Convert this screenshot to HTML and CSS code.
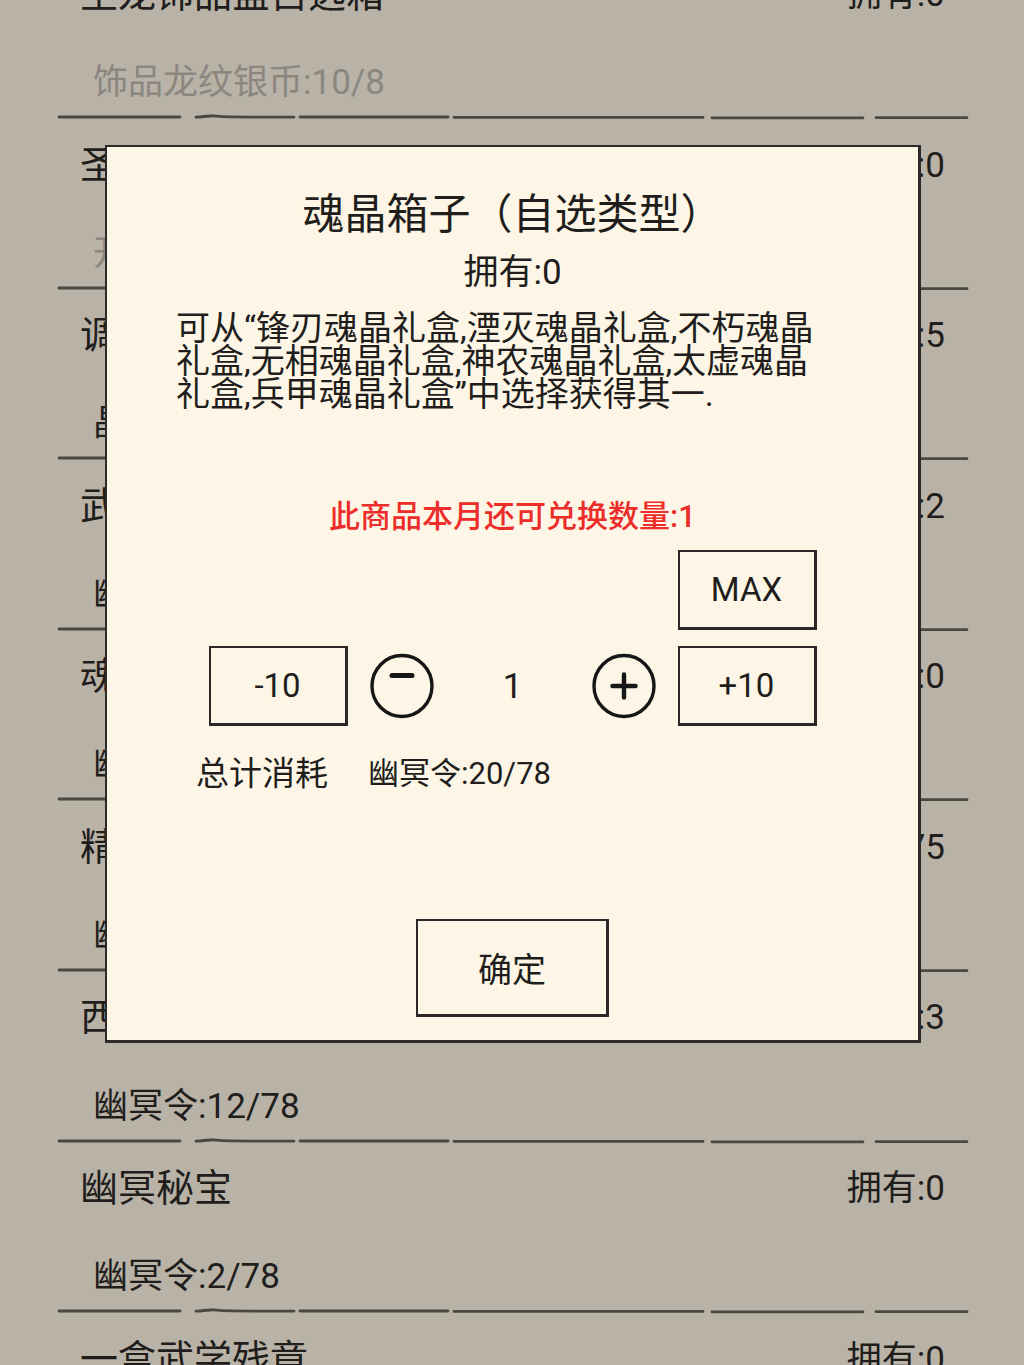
FILE: index.html
```html
<!DOCTYPE html>
<html lang="zh-CN">
<head>
  <meta charset="UTF-8">
  <title>兑换商店</title>
  <meta name="viewport" content="width=device-width, initial-scale=1.0">
  <link rel="stylesheet" href="styles.css">
</head>
<body>
  <!-- hand drawn divider, reused under every row -->
  <svg class="defs" width="0" height="0" aria-hidden="true">
    <symbol id="rule" viewBox="0 0 920 6">
      <path d="M4 3 H125 M141 3.2 Q150 2.6 155 2 Q160 1.6 165 2.4 Q172 3.2 239 3.2 M245 3 H393 M399 3.4 H648 M657 3.8 H808 M821 3.6 H912"
            fill="none" stroke="#4b4740" stroke-width="2.8" stroke-linecap="round"/>
    </symbol>
  </svg>

  <div class="shop">
    <div class="row">
      <div class="head"><span>圣龙饰品盒自选箱</span><span class="own">拥有:0</span></div>
      <div class="sub muted">饰品龙纹银币:10/8</div>
      <svg class="rule"><use href="#rule"/></svg>
    </div>
    <div class="row">
      <div class="head"><span>圣拉武斯套自选箱</span><span class="own">拥有:0</span></div>
      <div class="sub muted">开元通宝:10/8</div>
      <svg class="rule"><use href="#rule"/></svg>
    </div>
    <div class="row">
      <div class="head"><span>调息丹</span><span class="own">拥有:5</span></div>
      <div class="sub">晶石:6/78</div>
      <svg class="rule"><use href="#rule"/></svg>
    </div>
    <div class="row">
      <div class="head"><span>武学残页</span><span class="own">拥有:2</span></div>
      <div class="sub">幽冥令:8/78</div>
      <svg class="rule"><use href="#rule"/></svg>
    </div>
    <div class="row">
      <div class="head"><span>魂晶箱子</span><span class="own">拥有:0</span></div>
      <div class="sub">幽冥令:20/78</div>
      <svg class="rule"><use href="#rule"/></svg>
    </div>
    <div class="row">
      <div class="head"><span>精炼石</span><span class="own">拥有:75</span></div>
      <div class="sub">幽冥令:4/78</div>
      <svg class="rule"><use href="#rule"/></svg>
    </div>
    <div class="row">
      <div class="head"><span>西域宝匣</span><span class="own">拥有:3</span></div>
      <div class="sub">幽冥令:12/78</div>
      <svg class="rule"><use href="#rule"/></svg>
    </div>
    <div class="row">
      <div class="head"><span>幽冥秘宝</span><span class="own">拥有:0</span></div>
      <div class="sub">幽冥令:2/78</div>
      <svg class="rule"><use href="#rule"/></svg>
    </div>
    <div class="row">
      <div class="head"><span>一盒武学残章</span><span class="own">拥有:0</span></div>
      <div class="sub">幽冥令:1/78</div>
      <svg class="rule"><use href="#rule"/></svg>
    </div>
  </div>

  <div class="dialog">
    <div class="dlg-title">魂晶箱子（自选类型）</div>
    <div class="dlg-own">拥有:0</div>
    <div class="dlg-desc">可从“锋刃魂晶礼盒,湮灭魂晶礼盒,不朽魂晶礼盒,无相魂晶礼盒,神农魂晶礼盒,太虚魂晶礼盒,兵甲魂晶礼盒”中选择获得其一.</div>
    <div class="dlg-limit">此商品本月还可兑换数量:1</div>

    <div class="counter">
      <div class="max-line"><button class="box">MAX</button></div>
      <div class="step-line">
        <button class="box">-10</button>
        <button class="round minus" aria-label="减少">
          <svg viewBox="0 0 66 66" width="66" height="66">
            <ellipse cx="33" cy="33" rx="30" ry="30.5" fill="none" stroke="#161616" stroke-width="3.4"/>
            <path d="M23 22.5 H43" stroke="#161616" stroke-width="5" stroke-linecap="round"/>
          </svg>
        </button>
        <span class="count">1</span>
        <button class="round plus" aria-label="增加">
          <svg viewBox="0 0 66 66" width="66" height="66">
            <ellipse cx="33" cy="33" rx="30" ry="30.5" fill="none" stroke="#161616" stroke-width="3.4"/>
            <path d="M21.5 33 H44.5 M33 21.5 V44.5" stroke="#161616" stroke-width="4.4" stroke-linecap="round"/>
          </svg>
        </button>
        <button class="box">+10</button>
      </div>
    </div>

    <div class="total"><span class="total-label">总计消耗</span><span class="total-cost">幽冥令:20/78</span></div>

    <button class="box ok">确定</button>
  </div>
</body>
</html>
```

FILE: styles.css
```css
html, body { margin: 0; }
body {
  height: 1365px; overflow: hidden; position: relative;
  background: #b9b2a6; color: #1f1e1c;
  font-family: Roboto, "Noto Sans CJK SC", sans-serif;
}
.defs { position: absolute; }

/* item list */
.shop { margin-top: -50.6px; }
.row { height: 170.6px; display: flex; flex-direction: column; }
.head {
  height: 82px; padding: 0 79px 0 80px;
  display: flex; align-items: center; justify-content: space-between;
  font-size: 38px; white-space: nowrap;
}
.own { font-size: 35px; }
.sub { margin-top: 20.6px; height: 62px; line-height: 62px; padding-left: 93px; font-size: 35px; }
.muted { color: #8b867e; }
.rule { display: block; width: 920px; height: 6px; margin-left: 55px; margin-top: auto; filter: blur(0.6px); }

/* exchange dialog */
.dialog {
  position: absolute; left: 105px; top: 145px;
  width: 816px; height: 898px; box-sizing: border-box;
  background: #fdf6e6;
  border-style: solid; border-color: #2c2b29;
  border-width: 2px 3px 3px 2px;
  display: flex; flex-direction: column; align-items: center;
}
.dlg-title { margin-top: 43px; font-size: 42px; line-height: 50px; }
.dlg-own { margin-top: 11px; font-size: 35px; line-height: 44px; }
.dlg-desc {
  align-self: flex-start; margin: 16.5px 0 0 69px; width: 660px;
  font-size: 34px; line-height: 33px;
}
.dlg-limit { margin-top: 86px; font-size: 31px; line-height: 40px; color: #ec2d2a; font-weight: 500; }

.counter { margin-top: 13.5px; width: 608px; display: flex; flex-direction: column; gap: 16px; }
.max-line { display: flex; justify-content: flex-end; }
.step-line { display: flex; align-items: center; }

button { font: inherit; color: inherit; background: none; padding: 0; cursor: pointer; }
.box {
  width: 139px; height: 80px; box-sizing: border-box;
  border-style: solid; border-color: #2a2927;
  border-width: 2px 3px 3px 2px;
  background: #fdf6e6; font-size: 33px;
}
.round { border: none; width: 66px; height: 66px; }
.round svg { display: block; }
.minus { margin-left: 21px; }
.plus { margin-right: 21px; }
.count { width: 156px; text-align: center; font-size: 35px; }

.total {
  align-self: flex-start; margin: 28px 0 0 89px;
  display: flex; align-items: center; gap: 40px; line-height: 40px;
}
.total-label { font-size: 33px; }
.total-cost { font-size: 31px; }

.ok { margin-top: 125px; width: 193px; height: 98px; font-size: 34px; }
```
